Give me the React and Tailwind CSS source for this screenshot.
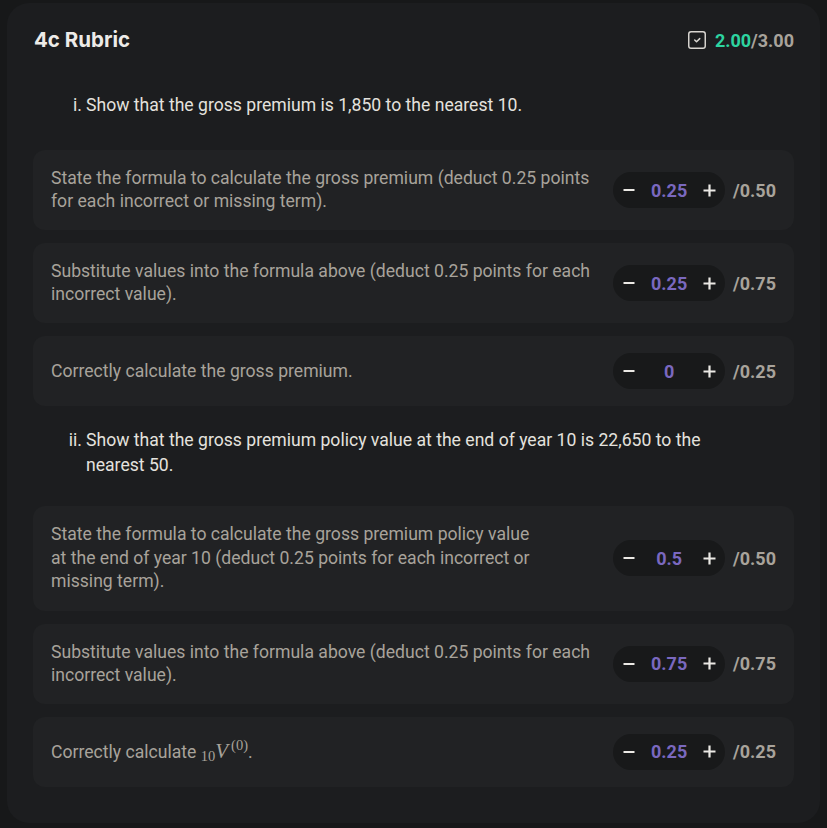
import React from "react";

const Check = () => (
  <svg width="22" height="22" viewBox="0 0 24 24" fill="none" stroke="#d9d6d1" strokeWidth="1.6" strokeLinecap="round" strokeLinejoin="round">
    <rect x="3" y="3" width="18" height="18" rx="2.5" />
    <path d="m9.5 12 2 2 3.5-3.5" />
  </svg>
);

const Minus = () => (
  <svg width="12" height="12" viewBox="0 0 12 12" fill="none" stroke="#ebe9e5" strokeWidth="2">
    <path d="M0.5 6h11" />
  </svg>
);

const Plus = () => (
  <svg width="13" height="13" viewBox="0 0 13 13" fill="none" stroke="#ebe9e5" strokeWidth="2.2">
    <path d="M0.5 6.5h12M6.5 0.5v12" />
  </svg>
);

function Row({ children, value, max, tall }) {
  return (
    <div className="flex items-center gap-4 rounded-xl bg-[#212224] py-[17px] pl-[18px] pr-[18px]">
      <div className={"flex-1 text-[17.6px] text-[#a8a39b] " + (tall ? "leading-[23.5px]" : "leading-[23px]")}>{children}</div>
      <div className="flex items-center gap-2">
        <div className="flex h-[36px] w-[112px] items-center justify-between rounded-full bg-[#18191a] pl-[10px] pr-[9px] text-[18px] font-bold">
          <Minus />
          <span className="text-[#7a68bf]">{value}</span>
          <Plus />
        </div>
        <span className="text-[18px] font-bold text-[#a8a39b]">/{max}</span>
      </div>
    </div>
  );
}

function Section({ marker, children, className }) {
  return (
    <div className={"flex text-[17.6px] leading-[25px] text-[#e4e2de] " + className}>
      <span className="w-[53px] shrink-0 pr-[4px] text-right">{marker}</span>
      <span className="max-w-[640px]">{children}</span>
    </div>
  );
}

export default function App() {
  return (
    <div className="min-h-[828px] bg-[#171819] pl-[7px] pr-[7px] pt-[3px] font-['Roboto',sans-serif]">
      <div className="rounded-[22px] bg-[#1c1d1f] px-[26px] pb-[36px] pt-[23px]">
        <div className="flex h-[28px] items-center justify-between pl-[1px]">
          <h1 className="font-['Inter',sans-serif] text-[20.5px] font-bold leading-[28px] text-[#edebe8]">4c Rubric</h1>
          <div className="flex items-center gap-[7px]">
            <Check />
            <span className="text-[18px] font-bold">
              <span className="text-[#2dd4a0]">2.00</span>
              <span className="text-[#a8a39b]">/3.00</span>
            </span>
          </div>
        </div>

        <Section marker="i." className="mt-[39px] mb-[32px]">
          Show that the gross premium is 1,850 to the nearest 10.
        </Section>

        <div className="flex flex-col gap-[13px]">
          <Row value="0.25" max="0.50">
            State the formula to calculate the gross premium (deduct 0.25 points for each incorrect or missing term).
          </Row>
          <Row value="0.25" max="0.75">
            Substitute values into the formula above (deduct 0.25 points for each incorrect value).
          </Row>
          <Row value="0" max="0.25">
            Correctly calculate the gross premium.
          </Row>
        </div>

        <Section marker="ii." className="mt-[21.5px] mb-[28.5px]">
          Show that the gross premium policy value at the end of year 10 is 22,650 to the nearest 50.
        </Section>

        <div className="flex flex-col gap-[13px]">
          <Row value="0.5" max="0.50" tall>
            <span className="block max-w-[490px]">
              State the formula to calculate the gross premium policy value at the end of year 10 (deduct 0.25 points for each incorrect or missing term).
            </span>
          </Row>
          <Row value="0.75" max="0.75">
            Substitute values into the formula above (deduct 0.25 points for each incorrect value).
          </Row>
          <Row value="0.25" max="0.25">
            Correctly calculate{" "}
            <span className="font-['Liberation_Serif',serif]">
              <sub className="text-[14.5px]">10</sub>
              <i className="text-[21px]">V</i>
              <sup className="ml-[3px] text-[14.5px]">(0)</sup>
            </span>
            .
          </Row>
        </div>
      </div>
    </div>
  );
}
